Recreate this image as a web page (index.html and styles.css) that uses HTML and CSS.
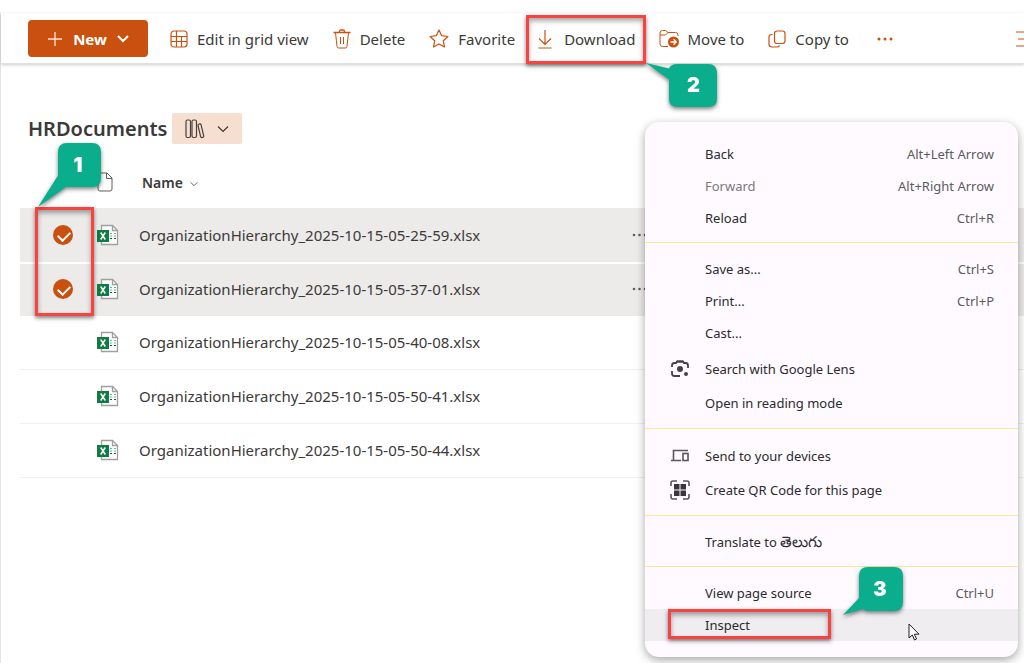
FILE: index.html
```html
<!DOCTYPE html>
<html lang="en">
<head>
    <meta charset="UTF-8">
    <meta name="viewport" content="width=device-width, initial-scale=1.0">
    <title>HRDocuments</title>
    <link rel="stylesheet" href="styles.css">
</head>
<body>
    <!-- Shared icons -->
    <svg class="sprite" aria-hidden="true">
        <symbol id="excel" viewBox="0 0 22 22">
            <path d="M4.500 1.500h11l5 5v14h-16z" fill="#fff" stroke="#a19f9d" stroke-width="1.300"/>
            <path d="M15.500 1.500v5h5" fill="none" stroke="#a19f9d" stroke-width="1.300"/>
            <path d="M13 9.500h2m2 0h2M13 12h2m2 0h2" stroke="#4fc39a" stroke-width="1.200"/>
            <path d="M13 14.500h2m2 0h2" stroke="#185c37" stroke-width="1.200"/>
            <path d="M0 6h12v12H0z" fill="#107c41"/>
            <path d="M3.700 8.500l4.600 7M8.300 8.500l-4.600 7" stroke="#fff" stroke-width="1.500"/>
        </symbol>
        <symbol id="chevron" viewBox="0 0 12 8">
            <path d="M1 1.500l5 5 5-5" fill="none" stroke="currentColor" stroke-width="1.200"/>
        </symbol>
    </svg>

    <div class="page">
        <!-- Command bar -->
        <header class="toolbar">
            <button class="new-btn" type="button">
                <svg width="16" height="16" viewBox="0 0 16 16"><path d="M8 1v14M1 8h14" stroke="#fbe3d5" stroke-width="1.300"/></svg>
                <span>New</span>
                <svg width="12" height="8" viewBox="0 0 12 8"><path d="M1 1l5 5 5-5" fill="none" stroke="#fff" stroke-width="2"/></svg>
            </button>
            <button class="tool-btn" type="button">
                <svg width="18" height="18" viewBox="0 0 18 18" fill="none" stroke="#ca5010" stroke-width="1.200"><rect x="1" y="1" width="16" height="16" rx="3"/><path d="M1 6.500h16M1 11.500h16M6.500 1v16M11.500 6.500V17"/></svg>
                <span>Edit in grid view</span>
            </button>
            <button class="tool-btn" type="button">
                <svg width="18" height="20" viewBox="0 0 18 20" fill="none" stroke="#ca5010"><path d="M.5 3.500h17M6.500 3.500v-1q0-1.500 1.500-1.500h2q1.500 0 1.500 1.500v1" stroke-width="1.300"/><path d="M2.500 3.500l1.500 14q.2 1.500 1.700 1.500h6.600q1.500 0 1.700-1.500l1.500-14M7.500 8v7M10.500 8v7"/></svg>
                <span>Delete</span>
            </button>
            <button class="tool-btn" type="button">
                <svg width="20" height="19" viewBox="0 0 20 19" fill="none" stroke="#ca5010" stroke-width="1.200" stroke-linejoin="round"><path d="M10 1l2.700 5.700 6.200.8-4.600 4.300 1.200 6.200L10 15l-5.500 3 1.200-6.200L1.100 7.500l6.200-.8z"/></svg>
                <span>Favorite</span>
            </button>
            <button class="tool-btn download" type="button">
                <svg width="14" height="20" viewBox="0 0 14 20" fill="none" stroke="#ca5010" stroke-width="1.200"><path d="M7 1v14M1 9.500l6 6 6-6M.5 19h13"/></svg>
                <span>Download</span>
                <span class="highlight"></span>
                <span class="callout callout-2">
                    <svg width="71" height="45" viewBox="0 0 71 45"><path d="M0 0l23 5.500Q25 1 31 1h31q9 0 9 9v26q0 8-9 8H32q-9 0-9-8V16.500z"/></svg>
                    <b>2</b>
                </span>
            </button>
            <button class="tool-btn" type="button">
                <svg width="20" height="19" viewBox="0 0 20 19"><path d="M9 17.500H3.500q-2.500 0-2.500-2.500V4q0-2.500 2.500-2.500h3l2.500 2h7.500q2.500 0 2.500 2.500v1M1 6h5.500L9 3.500" fill="none" stroke="#ca5010"/><circle cx="14.500" cy="13" r="5.500" fill="#ca5010"/><path d="M11.500 13h5.500M14.500 10.200l2.800 2.800-2.800 2.800" fill="none" stroke="#fff" stroke-width="1.300"/></svg>
                <span>Move to</span>
            </button>
            <button class="tool-btn" type="button">
                <svg width="18" height="18" viewBox="0 0 18 18" fill="none" stroke="#ca5010" stroke-width="1.200"><rect x="6.500" y="1" width="10.500" height="12.500" rx="2.500"/><path d="M4.500 4.500h-1Q1 4.500 1 7v7q0 3 3 3h5q2 0 2.500-1.500"/></svg>
                <span>Copy to</span>
            </button>
            <button class="tool-btn more-btn" type="button" aria-label="More">
                <svg width="16" height="4" viewBox="0 0 16 4" fill="#ca5010"><circle cx="2" cy="2" r="1.500"/><circle cx="8" cy="2" r="1.500"/><circle cx="14" cy="2" r="1.500"/></svg>
            </button>
            <button class="view-btn" type="button" aria-label="View options">
                <svg width="18" height="18" viewBox="0 0 18 18" stroke="#ca5010" stroke-width="1.200"><path d="M0 2h18M2 9h14M0 16h18"/></svg>
            </button>
        </header>

        <!-- Library title -->
        <div class="library">
            <h1>HRDocuments</h1>
            <button class="library-btn" type="button" aria-label="Switch view">
                <svg width="20" height="20" viewBox="0 0 20 20" fill="none" stroke="#4a3f3a" stroke-width="1.200"><rect x="1" y="1" width="4.500" height="17.500" rx="1.500"/><rect x="7" y="1" width="4.500" height="17.500" rx="1.500"/><path d="M13 6.500q-.2-1.300 1-1.500l.6-.2q1.200-.2 1.500 1l2.600 11q.3 1.200-.9 1.500l-.7.2q-1.200.2-1.500-1z"/></svg>
                <svg width="12" height="8"><use href="#chevron"/></svg>
            </button>
        </div>

        <!-- Documents -->
        <table class="files">
            <thead>
                <tr>
                    <th class="col-check"></th>
                    <th class="col-type">
                        <svg width="16" height="20" viewBox="0 0 16 20" fill="none" stroke="#605e5c"><path d="M3 1h7l5 5v11q0 2-2 2H3q-2 0-2-2V3q0-2 2-2zM9.500 1v5.500H15"/></svg>
                    </th>
                    <th class="col-name">Name <svg width="8" height="6"><use href="#chevron"/></svg></th>
                    <th class="col-more"></th>
                </tr>
            </thead>
            <tbody>
                <tr class="selected">
                    <td class="col-check">
                        <input type="checkbox" aria-label="Select row 1" checked>
                        <span class="highlight"></span>
                        <span class="callout callout-1">
                            <svg width="63" height="64" viewBox="0 0 63 64"><path d="M0 64l20-31.500V9q0-9 9-9h25q9 0 9 9v26q0 9-9 9H28z"/></svg>
                            <b>1</b>
                        </span>
                    </td>
                    <td class="col-type"><svg width="22" height="22"><use href="#excel"/></svg></td>
                    <td class="col-name"><a href="#">OrganizationHierarchy_2025-10-15-05-25-59.xlsx</a></td>
                    <td class="col-more"><svg width="16" height="4" viewBox="0 0 16 4" fill="#605e5c"><circle cx="2" cy="2" r="1.300"/><circle cx="7.500" cy="2" r="1.300"/><circle cx="13" cy="2" r="1.300"/></svg></td>
                </tr>
                <tr class="selected">
                    <td class="col-check"><input type="checkbox" aria-label="Select row 2" checked></td>
                    <td class="col-type"><svg width="22" height="22"><use href="#excel"/></svg></td>
                    <td class="col-name"><a href="#">OrganizationHierarchy_2025-10-15-05-37-01.xlsx</a></td>
                    <td class="col-more"><svg width="16" height="4" viewBox="0 0 16 4" fill="#605e5c"><circle cx="2" cy="2" r="1.300"/><circle cx="7.500" cy="2" r="1.300"/><circle cx="13" cy="2" r="1.300"/></svg></td>
                </tr>
                <tr>
                    <td class="col-check"><input type="checkbox" aria-label="Select row 3"></td>
                    <td class="col-type"><svg width="22" height="22"><use href="#excel"/></svg></td>
                    <td class="col-name"><a href="#">OrganizationHierarchy_2025-10-15-05-40-08.xlsx</a></td>
                    <td class="col-more"></td>
                </tr>
                <tr>
                    <td class="col-check"><input type="checkbox" aria-label="Select row 4"></td>
                    <td class="col-type"><svg width="22" height="22"><use href="#excel"/></svg></td>
                    <td class="col-name"><a href="#">OrganizationHierarchy_2025-10-15-05-50-41.xlsx</a></td>
                    <td class="col-more"></td>
                </tr>
                <tr>
                    <td class="col-check"><input type="checkbox" aria-label="Select row 5"></td>
                    <td class="col-type"><svg width="22" height="22"><use href="#excel"/></svg></td>
                    <td class="col-name"><a href="#">OrganizationHierarchy_2025-10-15-05-50-44.xlsx</a></td>
                    <td class="col-more"></td>
                </tr>
            </tbody>
        </table>
    </div>

    <!-- Context menu -->
    <div class="menu">
        <div class="menu-group">
            <button type="button"><span>Back</span><kbd>Alt+Left Arrow</kbd></button>
            <button type="button" class="dimmed"><span>Forward</span><kbd>Alt+Right Arrow</kbd></button>
            <button type="button"><span>Reload</span><kbd>Ctrl+R</kbd></button>
        </div>
        <div class="menu-group">
            <button type="button"><span>Save as...</span><kbd>Ctrl+S</kbd></button>
            <button type="button"><span>Print...</span><kbd>Ctrl+P</kbd></button>
            <button type="button"><span>Cast...</span></button>
            <div class="menu-tools">
                <button type="button">
                    <svg width="20" height="20" viewBox="0 0 20 20" fill="none" stroke="#45404a" stroke-width="1.800"><path d="M2 8V6.500Q2 4 4.500 4H6l1-1.500h6L14 4h1.500Q18 4 18 6.500V9M2 12v2.500Q2 17 4.500 17H10"/><path d="M7 1.500h6v2H7z" fill="#45404a" stroke="none"/><circle cx="10" cy="10" r="3" fill="#45404a" stroke="none"/><circle cx="16" cy="15" r="2" fill="#45404a" stroke="none"/></svg>
                    <span>Search with Google Lens</span>
                </button>
                <button type="button"><span>Open in reading mode</span></button>
            </div>
        </div>
        <div class="menu-group">
            <div class="menu-tools">
                <button type="button">
                    <svg width="20" height="20" viewBox="0 0 20 20" fill="none" stroke="#5a555e" stroke-width="1.600"><path d="M18 4.500H3.500V14M1 14.500h10"/><rect x="13" y="7.500" width="5" height="7"/></svg>
                    <span>Send to your devices</span>
                </button>
                <button type="button">
                    <svg width="20" height="20" viewBox="0 0 20 20" fill="none" stroke="#5a555e" stroke-width="1.600"><path d="M1 6V3q0-2 2-2h4M13 1h4q2 0 2 2v3M19 14v3q0 2-2 2h-4M7 19H3q-2 0-2-2v-3"/><path d="M4 4h5.500v5.500H4zM10.500 4H16v5.500h-5.500zM4 10.500h5.500V16H4zM10.500 10.500H16V16h-5.500z" fill="#3a353e" stroke="none"/></svg>
                    <span>Create QR Code for this page</span>
                </button>
            </div>
        </div>
        <div class="menu-group">
            <button type="button"><span>Translate to <span lang="te">తెలుగు</span></span></button>
        </div>
        <div class="menu-group">
            <button type="button"><span>View page source</span><kbd>Ctrl+U</kbd></button>
            <button type="button" class="active">
                <span>Inspect</span>
                <span class="highlight"></span>
                <span class="callout callout-3">
                    <svg width="60" height="48" viewBox="0 0 60 48"><path d="M0 48l16-17V9q0-9 9-9h26q9 0 9 9v26q0 9-9 9H25q-3 0-5-2z"/></svg>
                    <b>3</b>
                </span>
                <svg class="cursor" width="12" height="18" viewBox="0 0 12 18"><path d="M1 1v14l3.300-3 2.200 5 2-1-2.200-4.800H11z" fill="#fff" stroke="#222"/></svg>
            </button>
        </div>
    </div>
</body>
</html>
```
FILE: styles.css
```css
/* General Layout */
* {
    box-sizing: border-box;
}

body {
    font-family: "Noto Sans", "Open Sans", sans-serif;
    font-size: 15px;
    color: #3b3a39;
    background-color: white;
    margin: 0;
    position: relative;
    min-height: 100vh;
    overflow: hidden;
}

button {
    font: inherit;
    color: inherit;
    background: none;
    border: none;
    padding: 0;
    cursor: pointer;
}

svg {
    display: block;
    flex: none;
}

.sprite {
    position: absolute;
    width: 0;
    height: 0;
}

.page {
    margin-top: 13px;
    min-height: calc(100vh - 13px);
    border-left: 1px solid #e4e4e4;
}

/* Command bar */
.toolbar {
    display: flex;
    align-items: center;
    gap: 24px;
    height: 51px;
    padding: 1px 0 0 27px;
    border-bottom: 1px solid #e0e0e0;
    box-shadow: 0 1px 3px rgba(0, 0, 0, 0.2);
    white-space: nowrap;
}

.new-btn {
    display: flex;
    align-items: center;
    justify-content: center;
    gap: 10px;
    width: 120px;
    height: 37px;
    margin-right: -2px;
    border-radius: 4px;
    background-color: #ca5010;
    color: white;
    font-weight: 700;
}

.tool-btn {
    display: flex;
    align-items: center;
    gap: 9px;
    height: 37px;
    position: relative;
}

.download {
    gap: 12px;
    margin: 0 -1px;
}

.more-btn {
    padding: 0 4px;
}

.view-btn {
    margin-left: auto;
    margin-right: -10px;
}

/* Library title */
.library {
    display: flex;
    align-items: center;
    gap: 5px;
    padding: 49px 0 0 27px;
}

h1 {
    font-size: 20px;
    line-height: 31px;
    font-weight: 600;
    margin: 0;
}

.library-btn {
    display: flex;
    align-items: center;
    justify-content: center;
    gap: 12px;
    width: 70px;
    height: 31px;
    border-radius: 2px;
    background-color: #f6dfd1;
}

/* Documents */
.files {
    width: calc(100% - 19px);
    margin: 14px 0 0 19px;
    border-collapse: separate;
    border-spacing: 0;
    table-layout: fixed;
}

.files th {
    height: 50px;
    padding: 0 0 2px;
    font-size: 14px;
    font-weight: 600;
    text-align: left;
}

.files th.col-name {
    padding-left: 3px;
}

.files th.col-name svg {
    display: inline-block;
    margin-left: 3px;
    vertical-align: 1px;
}

.files td {
    height: 54px;
    padding: 0 0 2px;
    border-bottom: 1px solid #f0efee;
}

.files .selected td {
    padding-bottom: 0;
    background-color: #ecebea;
    border-bottom: none;
}

.files .selected + .selected td {
    padding-bottom: 2px;
    border-top: 2px solid white;
}

.files a {
    color: inherit;
    text-decoration: none;
}

.files .col-check {
    width: 77px;
    padding-left: 33px;
    position: relative;
}

.col-type {
    width: 42px;
}

.col-name {
    width: 493px;
}

input[type="checkbox"] {
    display: block;
    appearance: none;
    width: 20px;
    height: 20px;
    margin: 0;
    border-radius: 50%;
    background-color: #ca5010;
    opacity: 0;
}

input[type="checkbox"]:checked {
    opacity: 1;
}

input[type="checkbox"]:checked::before {
    content: "";
    display: block;
    width: 10px;
    height: 6px;
    margin: 6px 0 0 5px;
    border-left: 2px solid white;
    border-bottom: 2px solid white;
    transform: rotate(-45deg);
}

/* Red frames and numbered callouts */
.highlight {
    position: absolute;
    z-index: 2;
    border: 3px solid #f8433f;
    box-shadow: 0 2px 4px rgba(0, 0, 0, 0.5), inset 0 3px 5px rgba(0, 0, 0, 0.35);
    pointer-events: none;
}

.download .highlight {
    inset: -5px -10px -7px -12px;
}

.col-check .highlight {
    top: -1px;
    left: 15px;
    width: 59px;
    height: 109px;
}

.active .highlight {
    top: 0;
    left: 23px;
    width: 163px;
    height: 30px;
}

.callout {
    position: absolute;
    z-index: 3;
    filter: drop-shadow(0 2px 2px rgba(0, 0, 0, 0.5));
}

.callout path {
    fill: #0aae8c;
}

.callout b {
    position: absolute;
    top: 0;
    right: 0;
    width: 46px;
    font: 900 20px/44px Inter, sans-serif;
    color: white;
    text-align: center;
}

.callout-1 {
    left: 18px;
    top: -65px;
}

.callout-2 {
    left: calc(100% + 10px);
    top: 43px;
}

.callout-3 {
    left: 198px;
    top: -42px;
}

/* Context menu */
.menu {
    position: absolute;
    top: 122px;
    right: 6px;
    width: 373px;
    padding: 6px 0 8px;
    border-radius: 14px;
    background-color: #fefaff;
    box-shadow: 0 3px 10px rgba(0, 0, 0, 0.35);
    color: #2b2a2d;
    font-size: 13px;
}

.menu-group {
    padding: 10px 0 8px;
}

.menu-group + .menu-group {
    border-top: 1px solid #fbe69a;
}

.menu button {
    display: flex;
    align-items: center;
    width: 100%;
    height: 32px;
    padding: 0 24px 0 60px;
    position: relative;
}

.menu-tools button {
    height: 34px;
}

.menu button + .menu-tools {
    margin-top: 3px;
}

.menu-tools svg {
    margin: 0 15px 0 -35px;
}

.menu kbd {
    margin-left: auto;
    font: inherit;
    color: #5c5a60;
}

.menu .dimmed {
    color: #7a787d;
}

.menu .active {
    background-color: #efedef;
}

[lang="te"] {
    font-size: 15px;
    line-height: 16px;
}

.cursor {
    position: absolute;
    top: 14px;
    left: 263px;
}
```
